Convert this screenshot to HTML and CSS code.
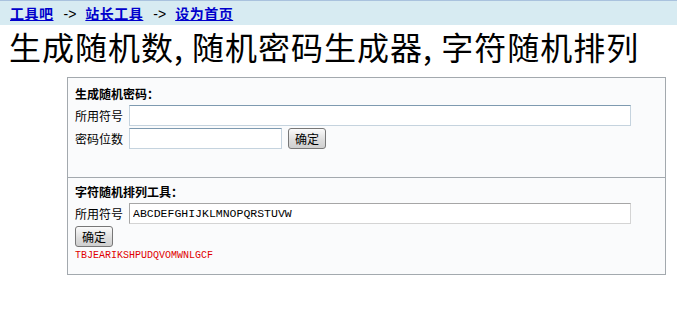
FILE: index.html
```html
<!DOCTYPE html>
<html lang="zh-CN">
<head>
<meta charset="utf-8">
<title>生成随机数</title>
<link rel="stylesheet" href="styles.css">
</head>
<body>
<div class="nav">
  <a href="#">工具吧</a><span class="arrow">-&gt;</span><a href="#">站长工具</a><span class="arrow">-&gt;</span><a href="#">设为首页</a>
</div>
<h1 class="title">生成随机数, 随机密码生成器, 字符随机排列</h1>
<div class="box">
  <section class="sec sec1">
    <div class="head">生成随机密码：</div>
    <div class="row">
      <span class="label">所用符号</span><input class="inp wide" type="text">
    </div>
    <div class="row">
      <span class="label">密码位数</span><input class="inp short" type="text"><button class="btn ml">确定</button>
    </div>
  </section>
  <section class="sec sec2">
    <div class="head">字符随机排列工具：</div>
    <div class="row">
      <span class="label">所用符号</span><input class="inp wide gray mono" type="text" value="ABCDEFGHIJKLMNOPQRSTUVW">
    </div>
    <div class="row"><button class="btn">确定</button></div>
    <div class="result">TBJEARIKSHPUDQVOMWNLGCF</div>
  </section>
</div>
</body>
</html>
```
FILE: styles.css
```css
html, body {
  margin: 0;
  padding: 0;
  background: #ffffff;
}
body {
  font-family: "Noto Sans CJK SC", "Liberation Sans", sans-serif;
  color: #000;
}
.nav {
  height: 24px;
  border-top: 1px solid #a9c2de;
  background: #d7ebf2;
  padding-left: 10px;
  font-size: 14px;
  line-height: 24px;
  font-weight: bold;
}
.nav a {
  color: #0000cc;
  text-decoration: underline;
  letter-spacing: 0.5px;
}
.arrow {
  display: inline-block;
  margin: 0 9px 0 10px;
  font-family: "Liberation Sans", sans-serif;
  font-weight: normal;
  color: #000;
}
.title {
  margin: 0;
  padding-left: 9px;
  height: 52px;
  font-size: 32px;
  line-height: 42px;
  font-weight: 400;
  letter-spacing: 1px;
  white-space: nowrap;
  font-family: "Noto Sans CJK SC", serif;
}
.box {
  margin-left: 67px;
  width: 597px;
  border: 1px solid #a3a9ae;
  background: #fafbfc;
}
.sec {
  padding: 0 0 0 7px;
}
.sec1 {
  height: 100px;
  padding-top: 6px;
  box-sizing: border-box;
  border-bottom: 1px solid #a3a9ae;
}
.sec2 {
  height: 96px;
  padding-top: 4px;
  box-sizing: border-box;
}
.head {
  font-size: 12px;
  font-weight: bold;
  line-height: 19px;
  height: 19px;
  margin-bottom: 2px;
}
.row {
  display: flex;
  align-items: center;
  height: 21px;
  margin-bottom: 2px;
}
.label {
  font-size: 12px;
  width: 54px;
  line-height: 21px;
}
.inp {
  box-sizing: border-box;
  height: 21px;
  margin: 0;
  padding: 0 3px;
  background: #fff;
  border: 1px solid #c5d3de;
  border-top-color: #7e9ab0;
  outline: none;
}
.inp.gray {
  border-color: #d4d4d4;
  border-top-color: #a6a6a6;
  border-left-color: #a6a6a6;
}
.wide { width: 502px; }
.short { width: 153px; }
.mono {
  font-family: "Liberation Mono", monospace;
  font-size: 11.5px;
  color: #000;
}
.btn {
  box-sizing: border-box;
  width: 38px;
  height: 21px;
  margin: 0;
  padding: 0;
  font-size: 12px;
  font-family: "Noto Sans CJK SC", sans-serif;
  line-height: 18px;
  color: #000;
  border: 1px solid #777;
  border-radius: 3px;
  background: linear-gradient(#fbfbfb, #dcdcdc 60%, #cfcfcf);
}
.ml { margin-left: 6px; }
.result {
  font-family: "Liberation Mono", monospace;
  font-size: 10px;
  line-height: 14px;
  color: #e00000;
}
```
